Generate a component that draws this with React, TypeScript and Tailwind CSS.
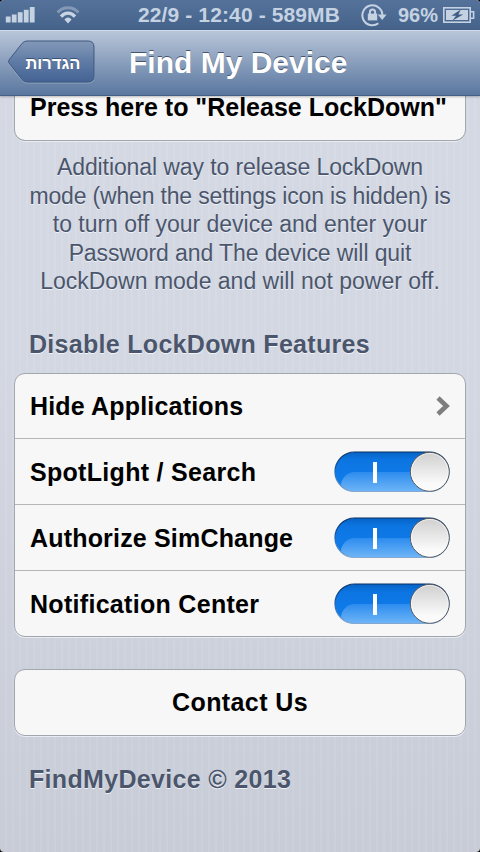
import type { ReactNode } from "react";

const toggles = [
  { label: "SpotLight / Search", tracking: "tracking-[0.3px]" },
  { label: "Authorize SimChange", tracking: "tracking-[0.18px]" },
  { label: "Notification Center", tracking: "tracking-[0.3px]" },
];

const helpText = [
  { line: "Additional way to release LockDown", tracking: "tracking-[-0.1px]" },
  { line: "mode (when the settings icon is hidden) is", tracking: "tracking-[-0.17px]" },
  { line: "to turn off your device and enter your", tracking: "tracking-[-0.03px]" },
  { line: "Password and The device will quit", tracking: "tracking-[-0.1px]" },
  { line: "LockDown mode and will not power off.", tracking: "tracking-normal" },
];

function SignalIcon() {
  return (
    <svg width="30" height="18" viewBox="0 0 30 18" fill="#c5d2e2">
      <rect x="0.8" y="11.5" width="4.8" height="6" />
      <rect x="6.8" y="9.5" width="4.8" height="8" />
      <rect x="12.8" y="7.2" width="4.8" height="10.3" />
      <rect x="18.8" y="4.8" width="4.8" height="12.7" />
      <rect x="24.8" y="2" width="4.8" height="15.5" />
    </svg>
  );
}

function WifiIcon() {
  return (
    <svg width="24" height="19" viewBox="0 0 24 19" fill="none" strokeWidth="3">
      <path d="M1.6 7.4C7.2 1.2 16.8 1.2 22.4 7.4" stroke="#8399b5" />
      <path d="M5 11.6C9 7 15 7 19 11.6" stroke="#c9d5e4" strokeWidth="3.2" />
      <path d="M8.4 14.4Q12 10.8 15.6 14.4L12 18.4Z" fill="#c9d5e4" />
    </svg>
  );
}

function RotationLockIcon() {
  return (
    <svg width="26" height="24" viewBox="0 0 26 24" fill="none" stroke="#c5d2e2">
      <path d="M17.4 20.3A10 10 0 1 1 21.4 12.2" strokeWidth="2" />
      <path d="M16.8 11.6H25.6L21.2 17Z" fill="#c5d2e2" stroke="none" />
      <rect x="6.8" y="10.6" width="9.4" height="6.8" fill="#c5d2e2" stroke="none" />
      <path d="M8.9 11V9a2.6 2.6 0 0 1 5.2 0V11" strokeWidth="2" />
    </svg>
  );
}

function BatteryIcon() {
  return (
    <svg width="32" height="16" viewBox="0 0 32 16">
      <rect x="0.8" y="0.8" width="26.4" height="14.4" fill="none" stroke="#c5d2e2" strokeWidth="1.6" />
      <rect x="3" y="3" width="22" height="10" fill="#c5d2e2" />
      <path d="M28 4.7h2.6v6.6H28" fill="none" stroke="#c5d2e2" strokeWidth="1.6" />
      <path d="M17.8 2.6L8.4 8.8h4.6L9.6 13.6 20.2 7.4h-4.8Z" fill="#405d85" />
    </svg>
  );
}

function BackButton() {
  return (
    <button className="relative ml-[7px] mt-[9px] h-[44px] w-[88px]">
      <svg className="absolute inset-0" width="88" height="44" viewBox="0 0 88 44">
        <defs>
          <linearGradient id="back" x1="0" y1="0" x2="0" y2="1">
            <stop offset="0" stopColor="#8499b8" />
            <stop offset="0.5" stopColor="#5f7ba5" />
            <stop offset="1" stopColor="#446394" />
          </linearGradient>
        </defs>
        <path
          d="M20 2H81Q87 2 87 8V37Q87 43 81 43H20Q17 43 15 40.5L2 24Q1 22.5 2 21L15 4.5Q17 2 20 2Z"
          stroke="#a9bad1"
          strokeOpacity="0.6"
          fill="none"
        />
        <path
          d="M20 1H81Q87 1 87 7V36Q87 42 81 42H20Q17 42 15 39.5L2 23Q1 21.5 2 20L15 3.5Q17 1 20 1Z"
          fill="url(#back)"
          stroke="#3f587f"
        />
      </svg>
      <span
        dir="rtl"
        className="absolute left-[18px] top-[11px] w-[56px] whitespace-nowrap text-center text-[16.5px] font-bold leading-[24px] text-white [text-shadow:0_-1px_0_#3c5272]"
      >
        הגדרות
      </span>
    </button>
  );
}

function Switch() {
  return (
    <svg className="mt-[2px]" width="116" height="42" viewBox="0 0 116 42">
      <defs>
        <linearGradient id="track" x1="0" y1="0" x2="0" y2="1">
          <stop offset="0" stopColor="#0762c4" />
          <stop offset="0.2" stopColor="#0c75e2" />
          <stop offset="1" stopColor="#117fee" />
        </linearGradient>
        <linearGradient id="shine" x1="0" y1="0" x2="0" y2="1">
          <stop offset="0" stopColor="#2c8cee" />
          <stop offset="0.7" stopColor="#74b8f8" />
        </linearGradient>
        <linearGradient id="knob" x1="0" y1="0" x2="0" y2="1">
          <stop offset="0" stopColor="#cfcfcf" />
          <stop offset="0.8" stopColor="#fafafa" />
        </linearGradient>
        <linearGradient id="rim" x1="0" y1="0" x2="0" y2="1">
          <stop offset="0" stopColor="#0a2f63" />
          <stop offset="0.5" stopColor="#1763b5" />
          <stop offset="1" stopColor="#83a9d2" />
        </linearGradient>
        <clipPath id="pill">
          <rect x="1" y="1" width="114" height="39.5" rx="19.75" />
        </clipPath>
      </defs>
      <g clipPath="url(#pill)">
        <rect x="1" y="1" width="114" height="39.5" fill="url(#track)" />
        <rect x="7" y="21" width="108" height="30" rx="14" fill="url(#shine)" />
      </g>
      <rect x="1" y="1" width="114" height="39.5" rx="19.75" fill="none" stroke="url(#rim)" strokeWidth="1.2" />
      <rect x="39" y="11" width="4" height="21" fill="#fff" />
      <circle cx="95.8" cy="20.8" r="19.4" fill="url(#knob)" stroke="#55585c" strokeWidth="1" />
      <circle cx="95.8" cy="20.8" r="18.4" fill="none" stroke="#fff" strokeOpacity="0.6" />
    </svg>
  );
}

function Row({ children, size }: { children: ReactNode; size: string }) {
  return <div className={`flex items-center justify-between border-[#b4b6ba] px-[15px] ${size}`}>{children}</div>;
}

export default function App() {
  return (
    <div className="w-[480px] bg-black">
      <main className="flex h-[852px] flex-col overflow-hidden rounded-[4px] bg-[repeating-linear-gradient(90deg,#ffffff00_0_5px,#ffffff12_5px_7px),linear-gradient(#d4d9e4,#d2d7e2_45%,#c7ccd7)] font-['Liberation_Sans',sans-serif] text-black">
        {/* Status bar */}
        <div className="flex h-[30px] shrink-0 items-center bg-linear-to-b from-[#54729a] to-[#45628a] text-[20px] font-bold text-[#c5d2e2]">
          <div className="-mt-[3px] ml-[5px]">
            <SignalIcon />
          </div>
          <div className="ml-[21px] -mt-px">
            <WifiIcon />
          </div>
          <span className="ml-[58px] w-[206px] whitespace-nowrap text-[21px] leading-[30px] tracking-[0.12px]">22/9 - 12:40 - 589MB</span>
          <div className="ml-[17px] -mt-px">
            <RotationLockIcon />
          </div>
          <span className="ml-[11px] w-[41px] whitespace-nowrap leading-[30px]">96%</span>
          <div className="ml-[4px] -mt-px">
            <BatteryIcon />
          </div>
        </div>

        {/* Navigation bar */}
        <header className="z-10 flex h-[66px] shrink-0 border-b border-t border-b-[#455f87] border-t-[#d2dce9] bg-linear-to-b from-[#b9c6d9] to-[#5a779f] shadow-[0_1px_2px_#00000040]">
          <BackButton />
          <h1 className="ml-[34px] whitespace-nowrap text-[30px] font-bold leading-[64px] text-white [text-shadow:0_-1px_0_#47566c]">
            Find My Device
          </h1>
        </header>

        {/* Settings, scrolled to the bottom */}
        <div className="flex flex-col px-[14px]">
          <div className="h-[45px] rounded-b-[11px] border border-t-0 border-[#a2a6ae] bg-[#f7f7f7] pl-[15px] shadow-[0_1px_0_#e8ebf1]">
            <p className="whitespace-nowrap text-[25px] font-bold leading-[22px]">Press here to "Release LockDown"</p>
          </div>

          <div className="mt-[12px] text-center text-[23px] leading-[28.5px] text-[#4b566c] [text-shadow:0_1px_0_#eef1f6]">
            {helpText.map(({ line, tracking }) => (
              <p key={line} className={`whitespace-nowrap ${tracking}`}>
                {line}
              </p>
            ))}
          </div>

          <h2 className="mt-[33px] whitespace-nowrap pl-[15px] text-[25px] font-bold leading-[30px] tracking-[0.3px] text-[#4b566c] [text-shadow:0_1px_0_#f2f4f8]">
            Disable LockDown Features
          </h2>

          <div className="mt-[14px] h-[264px] rounded-[11px] border border-[#a2a6ae] bg-[#f7f7f7] shadow-[0_1px_0_#e8ebf1]">
            <Row size="h-[65px] border-b">
              <span className="mt-[2px] whitespace-nowrap text-[25px] font-bold tracking-[0.18px]">Hide Applications</span>
              <svg width="15" height="20" viewBox="0 0 15 20" fill="none" stroke="#7e7e7e" strokeWidth="4.6">
                <path d="M3 2L11.5 10L3 18" />
              </svg>
            </Row>
            {toggles.map(({ label, tracking }, i) => (
              <Row key={label} size={i < toggles.length - 1 ? "h-[66px] border-b" : "h-[65px]"}>
                <span className={`mt-[3px] whitespace-nowrap text-[25px] font-bold ${tracking}`}>{label}</span>
                <Switch />
              </Row>
            ))}
          </div>

          <button className="mt-[32px] h-[67px] rounded-[11px] border border-[#a2a6ae] bg-[#f7f7f7] pt-[2px] text-[25px] font-bold tracking-[0.4px] shadow-[0_1px_0_#e8ebf1]">
            Contact Us
          </button>

          <footer className="mt-[28px] pl-[15px] text-[25px] font-bold leading-[30px] tracking-[0.32px] text-[#4b566c] [text-shadow:0_1px_0_#eef1f6]">
            FindMyDevice © 2013
          </footer>
        </div>
      </main>
    </div>
  );
}
